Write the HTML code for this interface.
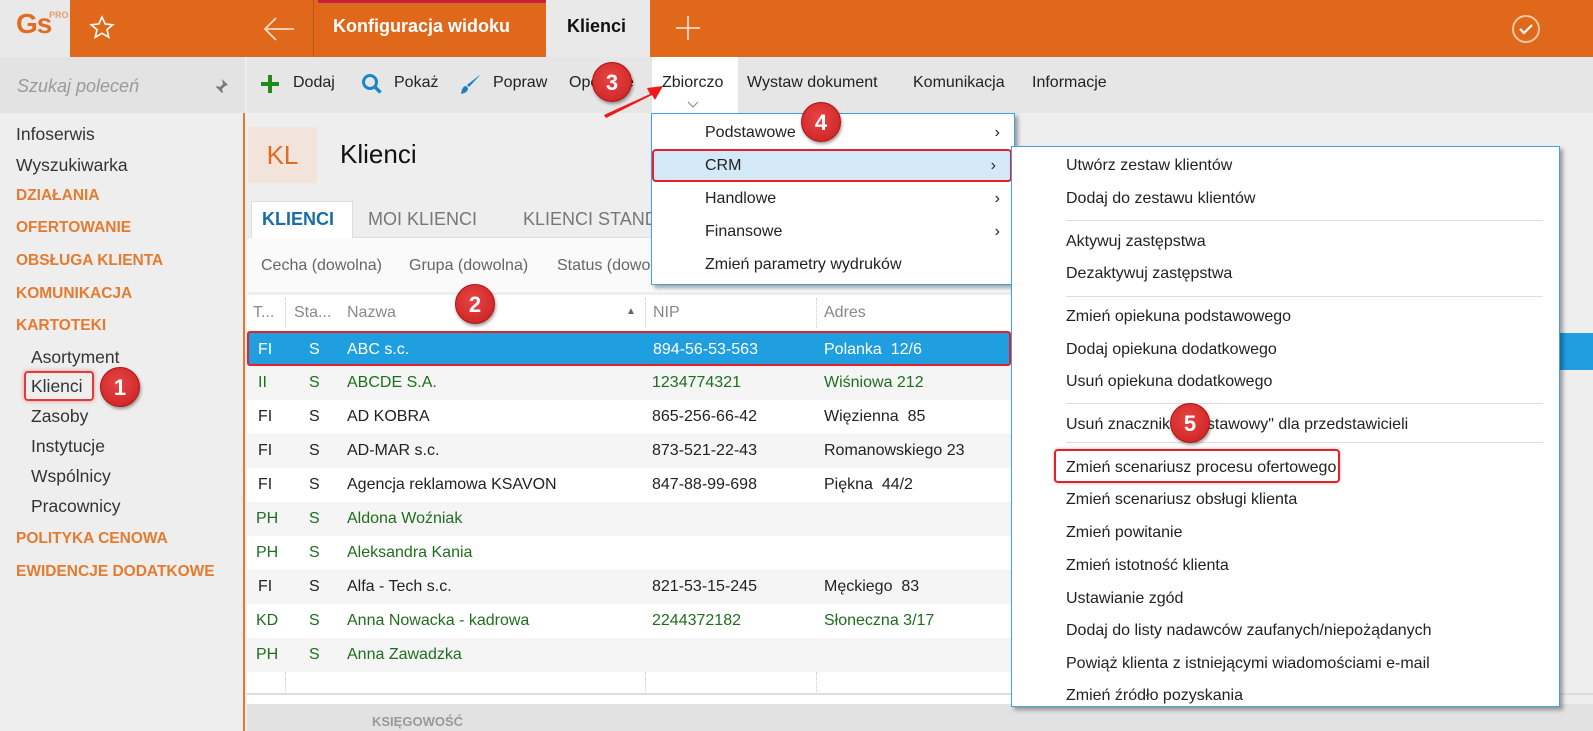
<!DOCTYPE html>
<html><head><meta charset="utf-8"><style>
*{margin:0;padding:0;box-sizing:border-box}
body{width:1593px;height:731px;position:relative;overflow:hidden;background:#eee;font-family:"Liberation Sans",sans-serif;font-size:16px;color:#222}
.a{position:absolute;white-space:nowrap}
.top{left:0;top:0;width:1593px;height:57px;background:#df681a}
.side{left:0;top:57px;width:245px;height:674px;background:#eeeeee;border-right:2px solid #e07a32}
.sect{color:#e57b2f;font-weight:bold;font-size:15.5px;left:16px}
.it{color:#333;font-size:17.5px}
.row{left:247px;width:1313px;height:34px}
.row span{position:absolute;top:8px}
.g{color:#1e6e1e}
.menu{background:#fff;border:1px solid #3ea2e4;box-shadow:3px 3px 4px rgba(0,0,0,.35)}
.mi{position:absolute;left:0;right:0;height:33px;line-height:33px}
.sep{position:absolute;left:54px;right:16px;height:1px;background:#ddd}
.badge{width:40px;height:40px;border-radius:50%;background:radial-gradient(circle at 45% 40%,#e84545,#c81e1e);color:#fff;font-size:22px;font-weight:bold;text-align:center;line-height:40px;box-shadow:1px 2px 3px rgba(0,0,0,.4);border:1px solid #b01010}
.chev{position:absolute;right:14px;top:0;font-size:16px}
</style></head><body>
<div class="a top"></div>
<div class="a" style="left:0;top:0;width:70px;height:57px;background:#e9e9e9"></div>
<div class="a" style="left:16px;top:8px;color:#e26d22;font-size:28px;font-weight:bold;letter-spacing:-1px">Gs</div>
<div class="a" style="left:49px;top:10px;color:#e89b6a;font-size:9px;font-weight:bold">PRO</div>
<svg class="a" style="left:89px;top:15px" width="26" height="26" viewBox="0 0 26 26"><path d="M13 2l3.2 7 7.6.7-5.8 5 1.8 7.5L13 18.3 6.2 22.2 8 14.7 2.2 9.7l7.6-.7z" fill="none" stroke="#fff" stroke-width="1.6"/></svg>
<svg class="a" style="left:262px;top:16px" width="34" height="26" viewBox="0 0 34 26"><path d="M32 13H3M14 2L3 13l11 11" fill="none" stroke="#fbd9c2" stroke-width="1.8"/></svg>
<div class="a" style="left:313px;top:0;width:1px;height:57px;background:#c45510"></div>
<div class="a" style="left:318px;top:0;width:237px;height:3px;background:#c8203e"></div>
<div class="a" style="left:333px;top:16px;color:#fff;font-size:18px;font-weight:bold">Konfiguracja widoku</div>
<div class="a" style="left:546px;top:0;width:104px;height:57px;background:#e9e9e9"></div>
<div class="a" style="left:567px;top:16px;color:#111;font-size:18px;font-weight:bold">Klienci</div>
<svg class="a" style="left:675px;top:15px" width="26" height="26"><path d="M13 1v24M1 13h24" stroke="#fbd9c2" stroke-width="1.8"/></svg>
<svg class="a" style="left:1510px;top:13px" width="32" height="32"><circle cx="16" cy="16" r="13" fill="none" stroke="#f6c6a4" stroke-width="2"/><path d="M10 16l4 4 8-8" fill="none" stroke="#fff" stroke-width="2.2"/></svg>

<div class="a side"></div>
<div class="a" style="left:0;top:57px;width:245px;height:56px;background:#e3e3e3"></div>
<div class="a" style="left:17px;top:76px;color:#9a9a9a;font-style:italic;font-size:18px">Szukaj poleceń</div>
<svg class="a" style="left:213px;top:78px" width="16" height="16"><path d="M9 1l6 6-3 1-3 3 1 3-1 1-3-3-5 5 5-5-3-3 1-1 3 1 3-3z" fill="#7a7a7a"/></svg>
<div class="a it" style="left:16px;top:124px">Infoserwis</div>
<div class="a it" style="left:16px;top:155px">Wyszukiwarka</div>
<div class="a sect" style="top:187px">DZIAŁANIA</div>
<div class="a sect" style="top:219px">OFERTOWANIE</div>
<div class="a sect" style="top:252px">OBSŁUGA KLIENTA</div>
<div class="a sect" style="top:285px">KOMUNIKACJA</div>
<div class="a sect" style="top:317px">KARTOTEKI</div>
<div class="a it" style="left:31px;top:347px">Asortyment</div>
<div class="a" style="left:24px;top:371px;width:70px;height:30px;border:2px solid #e23a3a;border-radius:4px;box-shadow:0 0 4px rgba(220,50,50,.5)"></div>
<div class="a it" style="left:31px;top:376px">Klienci</div>
<div class="a it" style="left:31px;top:406px">Zasoby</div>
<div class="a it" style="left:31px;top:436px">Instytucje</div>
<div class="a it" style="left:31px;top:466px">Wspólnicy</div>
<div class="a it" style="left:31px;top:496px">Pracownicy</div>
<div class="a sect" style="top:530px">POLITYKA CENOWA</div>
<div class="a sect" style="top:563px">EWIDENCJE DODATKOWE</div>

<div class="a" style="left:247px;top:57px;width:1346px;height:56px;background:#e6e6e6"></div>
<div class="a" style="left:652px;top:57px;width:86px;height:56px;background:#fff"></div>
<svg class="a" style="left:260px;top:74px" width="20" height="20"><path d="M10 1v18M1 10h18" stroke="#1e8a1e" stroke-width="4"/></svg>
<div class="a" style="left:293px;top:74px">Dodaj</div>
<svg class="a" style="left:361px;top:73px" width="22" height="22"><circle cx="9" cy="9" r="6.5" fill="none" stroke="#1b88c6" stroke-width="3"/><path d="M13.5 13.5l6 6" stroke="#1b88c6" stroke-width="3.5"/></svg>
<div class="a" style="left:394px;top:74px">Pokaż</div>
<svg class="a" style="left:459px;top:72px" width="24" height="24"><path d="M22 2L10 15l-2-2z" fill="#1b7fc0"/><path d="M7 14c-3 0-4 3-5 8 4-1 7-2 7-6z" fill="#1b7fc0"/></svg>
<div class="a" style="left:493px;top:74px">Popraw</div>
<div class="a" style="left:569px;top:74px">Operacje</div>
<div class="a" style="left:662px;top:74px">Zbiorczo</div>
<svg class="a" style="left:687px;top:101px" width="12" height="7"><path d="M1 1l5 5 5-5" fill="none" stroke="#888"/></svg>
<div class="a" style="left:747px;top:74px">Wystaw dokument</div>
<div class="a" style="left:913px;top:74px">Komunikacja</div>
<div class="a" style="left:1032px;top:74px">Informacje</div>

<div class="a" style="left:248px;top:127px;width:69px;height:56px;background:#f2e4da;color:#e06c21;font-size:26px;text-align:center;line-height:56px">KL</div>
<div class="a" style="left:340px;top:139px;font-size:26px;color:#111">Klienci</div>
<div class="a" style="left:247px;top:237px;width:1313px;height:1px;background:#ddd"></div>
<div class="a" style="left:251px;top:201px;width:102px;height:37px;background:#fff;border:1px solid #ddd;border-bottom:none"></div>
<div class="a" style="left:262px;top:209px;font-size:18px;font-weight:bold;color:#1a6ea8">KLIENCI</div>
<div class="a" style="left:368px;top:209px;font-size:18px;color:#777">MOI KLIENCI</div>
<div class="a" style="left:523px;top:209px;font-size:18px;color:#777">KLIENCI STANDARDOWI</div>
<div class="a" style="left:247px;top:238px;width:1313px;height:54px;background:#fafafa"></div>
<div class="a" style="left:261px;top:257px;color:#666">Cecha (dowolna)</div>
<div class="a" style="left:409px;top:257px;color:#666">Grupa (dowolna)</div>
<div class="a" style="left:557px;top:257px;color:#666">Status (dowolny)</div>

<div class="a" style="left:247px;top:295px;width:1313px;height:410px;background:#fff"></div>
<div class="a" style="left:253px;top:304px;color:#888">T...</div>
<div class="a" style="left:294px;top:304px;color:#888">Sta...</div>
<div class="a" style="left:347px;top:304px;color:#888">Nazwa</div>
<div class="a" style="left:626px;top:306px;font-size:10px;color:#666">▲</div>
<div class="a" style="left:653px;top:304px;color:#888">NIP</div>
<div class="a" style="left:824px;top:304px;color:#888">Adres</div>
<div class="a" style="left:285px;top:298px;height:30px;border-left:1px dotted #ccc"></div>
<div class="a" style="left:645px;top:298px;height:30px;border-left:1px dotted #ccc"></div>
<div class="a" style="left:816px;top:298px;height:30px;border-left:1px dotted #ccc"></div>
<div class="a" style="left:285px;top:672px;height:22px;border-left:1px dotted #ccc"></div>
<div class="a" style="left:645px;top:672px;height:22px;border-left:1px dotted #ccc"></div>
<div class="a" style="left:816px;top:672px;height:22px;border-left:1px dotted #ccc"></div>

<div class="a row" style="top:331px;height:35px;background:#1f9ee0;color:#fff;border:2px solid #e4202a;border-radius:3px;width:764px"><span style="left:9px">FI</span><span style="left:60px">S</span><span style="left:98px">ABC s.c.</span><span style="left:404px">894-56-53-563</span><span style="left:575px">Polanka&nbsp; 12/6</span></div>
<div class="a" style="left:1558px;top:333px;width:35px;height:37px;background:#1f9ee0"></div>
<div class="a row g" style="top:366px;background:#f5f5f5"><span style="left:11px">II</span><span style="left:62px">S</span><span style="left:100px">ABCDE S.A.</span><span style="left:405px">1234774321</span><span style="left:577px">Wiśniowa 212</span></div>
<div class="a row" style="top:400px"><span style="left:11px">FI</span><span style="left:62px">S</span><span style="left:100px">AD KOBRA</span><span style="left:405px">865-256-66-42</span><span style="left:577px">Więzienna&nbsp; 85</span></div>
<div class="a row" style="top:434px;background:#f5f5f5"><span style="left:11px">FI</span><span style="left:62px">S</span><span style="left:100px">AD-MAR s.c.</span><span style="left:405px">873-521-22-43</span><span style="left:577px">Romanowskiego 23</span></div>
<div class="a row" style="top:468px"><span style="left:11px">FI</span><span style="left:62px">S</span><span style="left:100px">Agencja reklamowa KSAVON</span><span style="left:405px">847-88-99-698</span><span style="left:577px">Piękna&nbsp; 44/2</span></div>
<div class="a row g" style="top:502px;background:#f5f5f5"><span style="left:9px">PH</span><span style="left:62px">S</span><span style="left:100px">Aldona Woźniak</span></div>
<div class="a row g" style="top:536px"><span style="left:9px">PH</span><span style="left:62px">S</span><span style="left:100px">Aleksandra Kania</span></div>
<div class="a row" style="top:570px;background:#f5f5f5"><span style="left:11px">FI</span><span style="left:62px">S</span><span style="left:100px">Alfa - Tech s.c.</span><span style="left:405px">821-53-15-245</span><span style="left:577px">Męckiego&nbsp; 83</span></div>
<div class="a row g" style="top:604px"><span style="left:9px">KD</span><span style="left:62px">S</span><span style="left:100px">Anna Nowacka - kadrowa</span><span style="left:405px">2244372182</span><span style="left:577px">Słoneczna 3/17</span></div>
<div class="a row g" style="top:638px;background:#f5f5f5"><span style="left:9px">PH</span><span style="left:62px">S</span><span style="left:100px">Anna Zawadzka</span></div>
<div class="a" style="left:247px;top:693px;width:1346px;height:2px;background:#ddd"></div>
<div class="a" style="left:247px;top:704px;width:1346px;height:27px;background:#e2e2e2"></div>
<div class="a" style="left:372px;top:714px;color:#999;font-size:13px;font-weight:bold">KSIĘGOWOŚĆ</div>

<div class="a menu" style="left:651px;top:113px;width:364px;height:172px">
<div class="mi" style="top:2px;padding-left:53px">Podstawowe<span class="chev">›</span></div>
<div class="mi" style="top:35px;padding-left:53px;background:#d3e9f8;border:2px solid #e4202a;border-radius:4px;left:0;right:2px;line-height:29px;padding-left:51px">CRM<span class="chev">›</span></div>
<div class="mi" style="top:68px;padding-left:53px">Handlowe<span class="chev">›</span></div>
<div class="mi" style="top:101px;padding-left:53px">Finansowe<span class="chev">›</span></div>
<div class="mi" style="top:134px;padding-left:53px">Zmień parametry wydruków</div>
</div>

<div class="a menu" style="left:1011px;top:146px;width:549px;height:561px">
<div class="mi" style="top:2px;padding-left:54px">Utwórz zestaw klientów</div>
<div class="mi" style="top:35px;padding-left:54px">Dodaj do zestawu klientów</div>
<div class="sep" style="top:73px"></div>
<div class="mi" style="top:78px;padding-left:54px">Aktywuj zastępstwa</div>
<div class="mi" style="top:110px;padding-left:54px">Dezaktywuj zastępstwa</div>
<div class="sep" style="top:149px"></div>
<div class="mi" style="top:153px;padding-left:54px">Zmień opiekuna podstawowego</div>
<div class="mi" style="top:186px;padding-left:54px">Dodaj opiekuna dodatkowego</div>
<div class="mi" style="top:218px;padding-left:54px">Usuń opiekuna dodatkowego</div>
<div class="sep" style="top:256px"></div>
<div class="mi" style="top:261px;padding-left:54px">Usuń znacznik "podstawowy" dla przedstawicieli</div>
<div class="sep" style="top:295px"></div>
<div class="a" style="left:42px;top:302px;width:286px;height:34px;border:2px solid #e4202a;border-radius:4px;box-shadow:0 0 3px rgba(0,0,0,.3)"></div>
<div class="mi" style="top:304px;padding-left:54px">Zmień scenariusz procesu ofertowego</div>
<div class="mi" style="top:336px;padding-left:54px">Zmień scenariusz obsługi klienta</div>
<div class="mi" style="top:369px;padding-left:54px">Zmień powitanie</div>
<div class="mi" style="top:402px;padding-left:54px">Zmień istotność klienta</div>
<div class="mi" style="top:435px;padding-left:54px">Ustawianie zgód</div>
<div class="mi" style="top:467px;padding-left:54px">Dodaj do listy nadawców zaufanych/niepożądanych</div>
<div class="mi" style="top:500px;padding-left:54px">Powiąż klienta z istniejącymi wiadomościami e-mail</div>
<div class="mi" style="top:532px;padding-left:54px">Zmień źródło pozyskania</div>
</div>

<svg class="a" style="left:600px;top:78px" width="70" height="42"><path d="M4 37L50 16l-3-6 16-2-8 14-3-5L6 40z" fill="#f01818"/></svg>
<div class="a badge" style="left:100px;top:367px">1</div>
<div class="a badge" style="left:455px;top:284px">2</div>
<div class="a badge" style="left:592px;top:62px">3</div>
<div class="a badge" style="left:801px;top:102px">4</div>
<div class="a badge" style="left:1170px;top:403px">5</div>
</body></html>
